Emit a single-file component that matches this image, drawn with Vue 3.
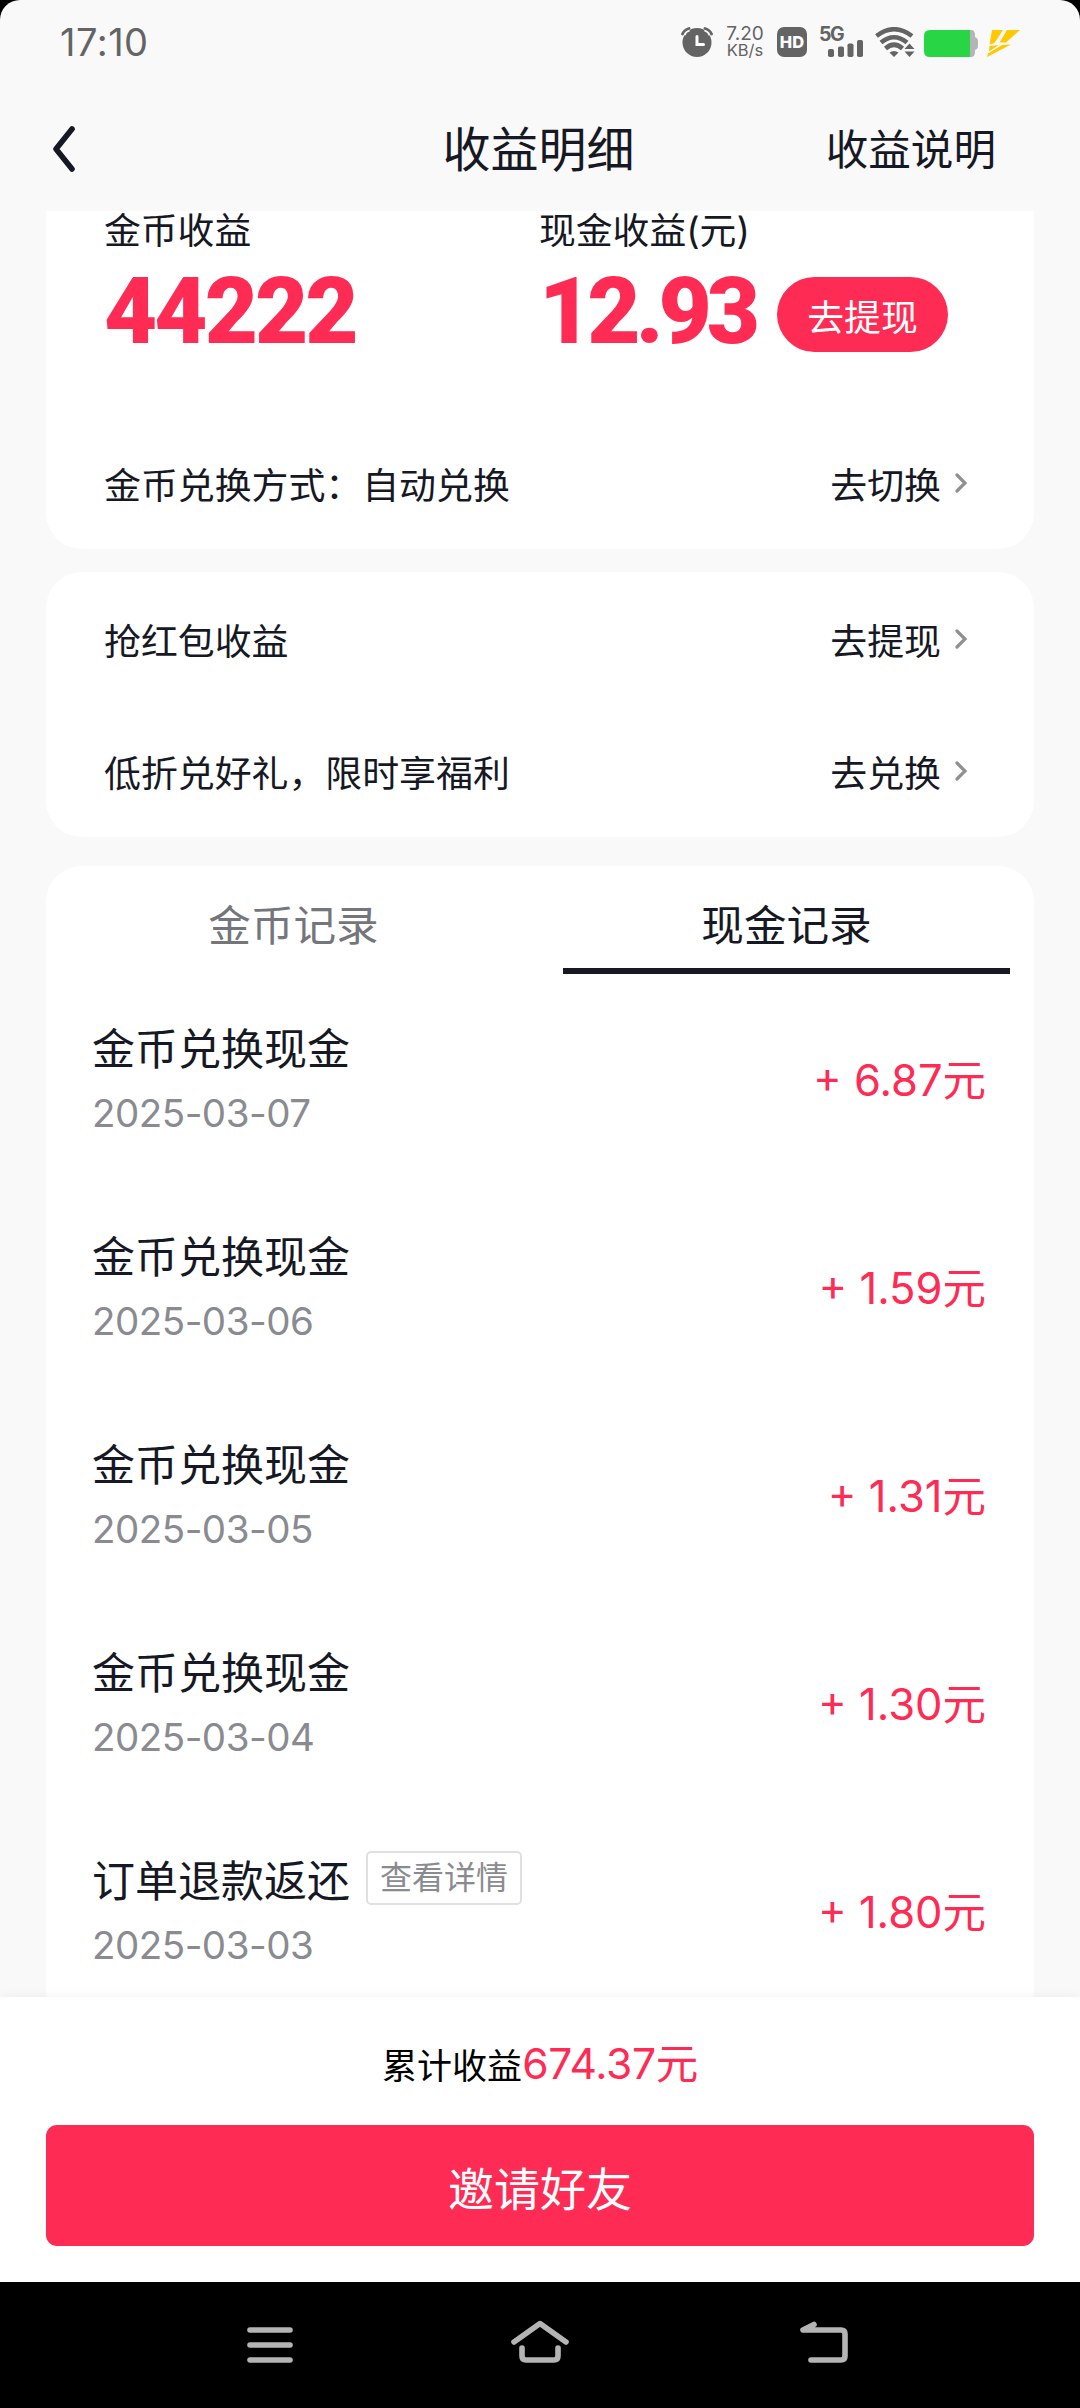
<script setup>
const records = [
  { title: '金币兑换现金', date: '2025-03-07', amount: '6.87' },
  { title: '金币兑换现金', date: '2025-03-06', amount: '1.59' },
  { title: '金币兑换现金', date: '2025-03-05', amount: '1.31' },
  { title: '金币兑换现金', date: '2025-03-04', amount: '1.30' },
  { title: '订单退款返还', date: '2025-03-03', amount: '1.80', detail: true },
]
const links = [
  { label: '抢红包收益', action: '去提现' },
  { label: '低折兑好礼，限时享福利', action: '去兑换' },
]
</script>

<template>
  <div class="phone">
    <div class="screen">
      <div class="status">
        <span class="clock">17:10</span>
        <div class="indicators">
          <svg class="alarm" width="32" height="30" viewBox="0 0 32 30">
            <circle cx="16" cy="15.500" r="14.500" fill="#646464" />
            <path d="M1.500 7.500Q3 3 8 1.500M30.500 7.500Q29 3 24 1.500" fill="none" stroke="#f9f9f9" stroke-width="6" />
            <path d="M1.500 7Q3 3 8 1.500M30.500 7Q29 3 24 1.500" fill="none" stroke="#646464" stroke-width="2.800" stroke-linecap="round" />
            <path d="M16 9.500V17.500H22.500" fill="none" stroke="#fff" stroke-width="3" stroke-linecap="round" />
          </svg>
          <div class="speed"><span>7.20</span><span>KB/s</span></div>
          <div class="hd">HD</div>
          <div class="signal">
            <span class="net">5G</span>
            <svg width="36" height="17" viewBox="0 0 36 17" fill="#646464">
              <rect x="0" y="9" width="6" height="8" rx="1.800" />
              <rect x="10" y="6.500" width="6" height="10.500" rx="1.800" />
              <rect x="19.500" y="3.500" width="6" height="13.500" rx="1.800" />
              <rect x="29" y="0" width="6" height="17" rx="1.800" />
            </svg>
          </div>
          <svg class="wifi" width="40" height="30" viewBox="0 0 40 30">
            <g fill="none" stroke="#646464" stroke-width="4.600">
              <path d="M1.500 9Q19 -4.500 37 9" />
              <path d="M6 15.500Q19 5 32 15.500" />
              <path d="M10.500 21.500Q19 14 27.500 21.500" />
            </g>
            <path d="M19 30L14.500 25.500Q19 22.500 23.500 25.500ZM29.500 22L34.500 16.500L39.500 22ZM29.500 24.500L34.500 30L39.500 24.500Z" fill="#646464" />
          </svg>
          <svg class="battery" width="54" height="27" viewBox="0 0 54 27">
            <path d="M46 0H47Q51 0 51 5V7Q54 8 54 11V16Q54 19 51 20V22Q51 27 47 27H46Z" fill="#b5b5b5" />
            <path d="M6 0H46V27H6Q0 27 0 21V6Q0 0 6 0Z" fill="#28d645" />
          </svg>
          <svg class="bolt" width="33" height="27" viewBox="0 0 33 27" fill="#ffc800">
            <path d="M5 0H16L7.500 13L2.500 14.500Z" />
            <path d="M20 0H33L19 12.500H12.500Z" />
            <path d="M2.500 16L11.500 15L2 21.500ZM15 15L24 14.500L0 27L1 23.500Z" />
          </svg>
        </div>
      </div>

      <header class="header">
        <svg class="back" width="22" height="46" viewBox="0 0 22 46">
          <path d="M19 3L3 23L19 43" fill="none" stroke="#161823" stroke-width="5.600" stroke-linecap="round" stroke-linejoin="round" />
        </svg>
        <h1>收益明细</h1>
        <span class="help">收益说明</span>
      </header>

      <main class="content">
        <section class="card summary">
          <div class="totals">
            <div class="total">
              <span class="label">金币收益</span>
              <span class="number">44222</span>
            </div>
            <div class="total">
              <span class="label">现金收益(元)</span>
              <div class="cash">
                <span class="number">12.93</span>
                <button class="withdraw">去提现</button>
              </div>
            </div>
          </div>
          <div class="link mode">
            <span>金币兑换方式：自动兑换</span>
            <span class="action">去切换
              <svg width="13" height="22" viewBox="0 0 13 22"><path d="M2 3L10 11L2 19" /></svg>
            </span>
          </div>
        </section>

        <section class="card links">
          <div v-for="item in links" :key="item.label" class="link">
            <span>{{ item.label }}</span>
            <span class="action">{{ item.action }}
              <svg width="13" height="22" viewBox="0 0 13 22"><path d="M2 3L10 11L2 19" /></svg>
            </span>
          </div>
        </section>

        <section class="card history">
          <nav class="tabs">
            <span class="tab">金币记录</span>
            <span class="tab active">现金记录</span>
          </nav>
          <div v-for="r in records" :key="r.date" class="record">
            <div class="info">
              <div class="title">{{ r.title }}<span v-if="r.detail" class="tag">查看详情</span></div>
              <div class="date">{{ r.date }}</div>
            </div>
            <div class="amount">+ {{ r.amount }}元</div>
          </div>
        </section>
      </main>

      <footer class="footer">
        <div class="sum">累计收益<span>674.37元</span></div>
        <button class="invite">邀请好友</button>
      </footer>
    </div>

    <div class="navbar">
      <svg width="60" height="46" viewBox="0 0 60 46"><path d="M10 10H50M10 25H50M10 40H50" /></svg>
      <svg width="60" height="46" viewBox="0 0 60 46"><path d="M4 22L30 3.500L56 22M12 28V36Q12 40 16 40H44Q48 40 48 36V28" /></svg>
      <svg width="60" height="46" viewBox="0 0 60 46"><path d="M19 4.500L8 10H46Q50 10 50 14V36Q50 40 46 40H16" /></svg>
    </div>
  </div>
</template>

<style>
body {
  margin: 0;
  background: #000;
}
</style>

<style scoped>
.phone {
  width: 1080px;
  height: 2408px;
  display: flex;
  flex-direction: column;
  background: #000;
  color: #161823;
  font-family: Inter, "Noto Sans CJK SC", sans-serif;
  overflow: hidden;
}
.screen {
  height: 2282px;
  display: flex;
  flex-direction: column;
  background: #f9f9f9;
  border-radius: 20px 20px 0 0;
  overflow: hidden;
}
.status {
  height: 84px;
  box-sizing: border-box;
  padding: 0 60px;
  display: flex;
  justify-content: space-between;
  align-items: center;
  flex: none;
  color: #646464;
}
.clock {
  font-size: 38px;
  letter-spacing: 0.500px;
}
.indicators {
  display: flex;
  height: 30px;
}
.speed {
  width: 38px;
  margin-left: 13px;
  display: flex;
  flex-direction: column;
  align-items: center;
  font-size: 16.500px;
  line-height: 16px;
  margin-top: -1px;
  white-space: nowrap;
}
.speed span:first-child {
  font-size: 19px;
}
.hd {
  width: 30px;
  height: 30px;
  margin-left: 13px;
  border-radius: 7px;
  background: #646464;
  color: #fff;
  font-size: 16.500px;
  font-weight: 800;
  line-height: 31px;
  text-align: center;
}
.signal {
  width: 45px;
  margin-left: 12px;
  display: flex;
  flex-direction: column;
}
.net {
  height: 13px;
  font-size: 19.500px;
  font-weight: 700;
  line-height: 14px;
  letter-spacing: -1.500px;
}
.signal svg {
  margin-left: 9px;
  flex: none;
}
.wifi {
  margin-left: 11px;
}
.battery {
  margin: 3px 0 0 9px;
}
.bolt {
  margin: 3px 0 0 9px;
}
.header {
  height: 127px;
  box-sizing: border-box;
  padding: 3px 84px 0 53px;
  display: grid;
  grid-template-columns: 200px 1fr 174px;
  align-items: center;
  flex: none;
}
h1 {
  margin: 0 0 0 2px;
  padding-top: 2px;
  font-size: 48px;
  font-weight: 400;
  line-height: 60px;
  text-align: center;
}
.help {
  padding-top: 2px;
  font-size: 42.600px;
  line-height: 60px;
  text-align: right;
}
.content {
  flex: 1;
  min-height: 0;
  padding: 0 46px;
  overflow: hidden;
}
.card {
  background: #fff;
  border-radius: 36px;
}
.summary {
  height: 338px;
  border-radius: 0 0 36px 36px;
}
.totals {
  display: grid;
  grid-template-columns: 435px 1fr;
  padding-left: 58px;
  height: 208px;
}
.total {
  display: flex;
  flex-direction: column;
}
.label {
  font-size: 36.800px;
  line-height: 40px;
}
.number {
  margin-top: 28px;
  font-family: Roboto, sans-serif;
  font-size: 92px;
  font-weight: 900;
  line-height: 66px;
  letter-spacing: -3px;
  color: #fe2c55;
}
.cash {
  display: flex;
}
.cash .number {
  width: 238px;
  letter-spacing: -5px;
}
.withdraw {
  width: 171px;
  height: 75px;
  margin: 26px 0 0;
  padding: 0;
  border: 0;
  border-radius: 38px;
  background: #fe2c55;
  color: #fff;
  font: 36.800px/77px "Noto Sans CJK SC", sans-serif;
}
.link {
  height: 132px;
  box-sizing: border-box;
  padding: 0 66px 2px 58px;
  display: flex;
  align-items: center;
  justify-content: space-between;
  font-size: 36.900px;
}
.mode {
  height: 130px;
}
.action {
  display: flex;
  align-items: center;
}
.action svg {
  margin-left: 14px;
}
.action path {
  fill: none;
  stroke: #909090;
  stroke-width: 3.200;
  stroke-linecap: round;
}
.links {
  margin-top: 23px;
  height: 263px;
  padding-top: 2px;
}
.history {
  margin-top: 29px;
  height: 1180px;
}
.tabs {
  display: flex;
  padding: 0 24px;
}
.tab {
  flex: 1;
  height: 102px;
  border-bottom: 6px solid transparent;
  font-size: 42.600px;
  line-height: 119px;
  text-align: center;
  color: #75767b;
}
.tab.active {
  border-color: #161823;
  color: #161823;
}
.tab + .tab {
  margin-left: 46px;
}
.record {
  height: 208px;
  padding: 0 48px 0 46px;
  display: flex;
  align-items: center;
  justify-content: space-between;
}
.title {
  display: flex;
  align-items: center;
  height: 56px;
  font-size: 43px;
}
.tag {
  margin-left: 16px;
  padding: 0 12px;
  border: 2px solid #e0e0e1;
  border-radius: 5px;
  font-size: 32px;
  line-height: 50px;
  color: #8a8b91;
}
.date {
  margin-top: 14px;
  font-size: 38.500px;
  line-height: 50px;
  color: #8a8b91;
  letter-spacing: -0.500px;
}
.amount {
  padding-top: 4px;
  font-size: 43.500px;
  line-height: 60px;
  color: #fe2c55;
}
.footer {
  height: 285px;
  box-sizing: border-box;
  padding: 37px 46px 0;
  flex: none;
  position: relative;
  background: #fff;
  box-shadow: 0 0 12px rgba(0, 0, 0, 0.06);
}
.sum {
  height: 60px;
  line-height: 60px;
  font-size: 35px;
  text-align: center;
  color: #000;
}
.sum span {
  font-size: 42.500px;
  letter-spacing: -0.300px;
  color: #fe2c55;
}
.invite {
  display: block;
  width: 988px;
  height: 121px;
  margin-top: 31px;
  padding: 0;
  border: 0;
  border-radius: 11px;
  background: #fe2c55;
  color: #fff;
  font: 46px/120px "Noto Sans CJK SC", sans-serif;
}
.navbar {
  height: 126px;
  box-sizing: border-box;
  padding: 38px 0 0 240px;
  display: flex;
  align-items: flex-start;
}
.navbar svg + svg {
  margin-left: 210px;
}
.navbar svg:last-child {
  margin-left: 225px;
}
.navbar path {
  fill: none;
  stroke: #b4b4b4;
  stroke-width: 5.600;
  stroke-linecap: round;
  stroke-linejoin: round;
}
</style>
